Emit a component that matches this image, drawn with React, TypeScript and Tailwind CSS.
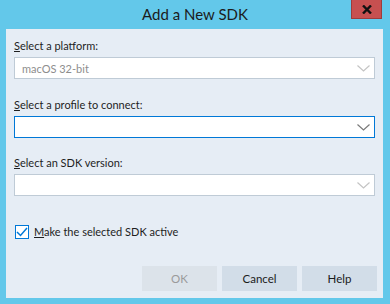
const font = { fontFamily: "Lato, 'Liberation Sans', sans-serif" };

function Chevron({ color }: { color: string }) {
    return (
        <svg width="13" height="7" viewBox="0 0 13 7" className="shrink-0">
            <polyline points="0.5,0.5 6.5,6 12.5,0.5" fill="none" stroke={color} strokeWidth="1.2" />
        </svg>
    );
}

function Combo({
    value,
    focused,
    disabled,
}: {
    value?: string;
    focused?: boolean;
    disabled?: boolean;
}) {
    return (
        <div
            className={`mt-[3px] flex h-[22px] items-center justify-between bg-white pl-[7px] pr-[4px] border ${focused ? "border-[#0078d7]" : "border-[#bfcbd6]"
                }`}
        >
            <span className={`text-[11px] leading-none ${disabled ? "text-[#8d8d8d]" : "text-black"}`}>
                {value}
            </span>
            <Chevron color={focused ? "#7a7a7a" : "#c4c4c4"} />
        </div>
    );
}

function Label({ first, rest }: { first: string; rest: string }) {
    return (
        <div className="h-[16px] text-[11px] leading-[16px] text-[#1e1e1e]">
            <u>{first}</u>
            {rest}
        </div>
    );
}

export default function App() {
    return (
        <div className="flex h-[304px] w-[390px] flex-col bg-[#63c8ea]" style={font}>
            {/* title bar */}
            <div className="relative flex h-[29px] items-center justify-center">
                <span className="text-[15px] text-[#1b1b1b]">Add a New SDK</span>
                <div className="absolute right-[8px] top-0 flex h-[19px] w-[31px] items-center justify-center border border-t-0 border-[#9e3c3c] bg-[#c75050]">
                    <svg width="10" height="9" viewBox="0 0 10 9">
                        <path d="M1 0.5 L9 8.5 M9 0.5 L1 8.5" stroke="#111" strokeWidth="2.4" />
                    </svg>
                </div>
            </div>

            {/* body */}
            <div className="mb-[6px] ml-[6px] mr-[7px] flex flex-1 flex-col bg-[#e6edf5]">
                <div className="px-[8px] pt-[9px]">
                    <Label first="S" rest="elect a platform:" />
                    <Combo value="macOS 32-bit" disabled />

                    <div className="mt-[18px]">
                        <Label first="S" rest="elect a profile to connect:" />
                        <Combo focused />
                    </div>

                    <div className="mt-[17px]">
                        <Label first="S" rest="elect an SDK version:" />
                        <Combo />
                    </div>

                    <div className="mt-[28px] flex items-center gap-[5px] pl-[1px]">
                        <div className="flex h-[14px] w-[14px] items-center justify-center border border-[#0078d7] bg-white">
                            <svg width="12" height="10" viewBox="0 0 12 10">
                                <polyline points="1,5 4.5,8.5 11,1" fill="none" stroke="#0078d7" strokeWidth="1.5" />
                            </svg>
                        </div>
                        <span className="text-[11px] leading-[16px] text-[#1e1e1e]">
                            <u>M</u>ake the selected SDK active
                        </span>
                    </div>
                </div>

                <div className="mt-auto mb-[7px] flex justify-end gap-[5px] pr-[6px]">
                    <button className="h-[25px] w-[75px] bg-[#dce3ea] text-[11.5px] text-[#9a9a9a]">OK</button>
                    <button className="h-[25px] w-[75px] bg-[#d2dde8] text-[11.5px] text-[#1b1b1b]">Cancel</button>
                    <button className="h-[25px] w-[75px] bg-[#d2dde8] text-[11.5px] text-[#1b1b1b]">Help</button>
                </div>
            </div>
        </div>
    );
}
